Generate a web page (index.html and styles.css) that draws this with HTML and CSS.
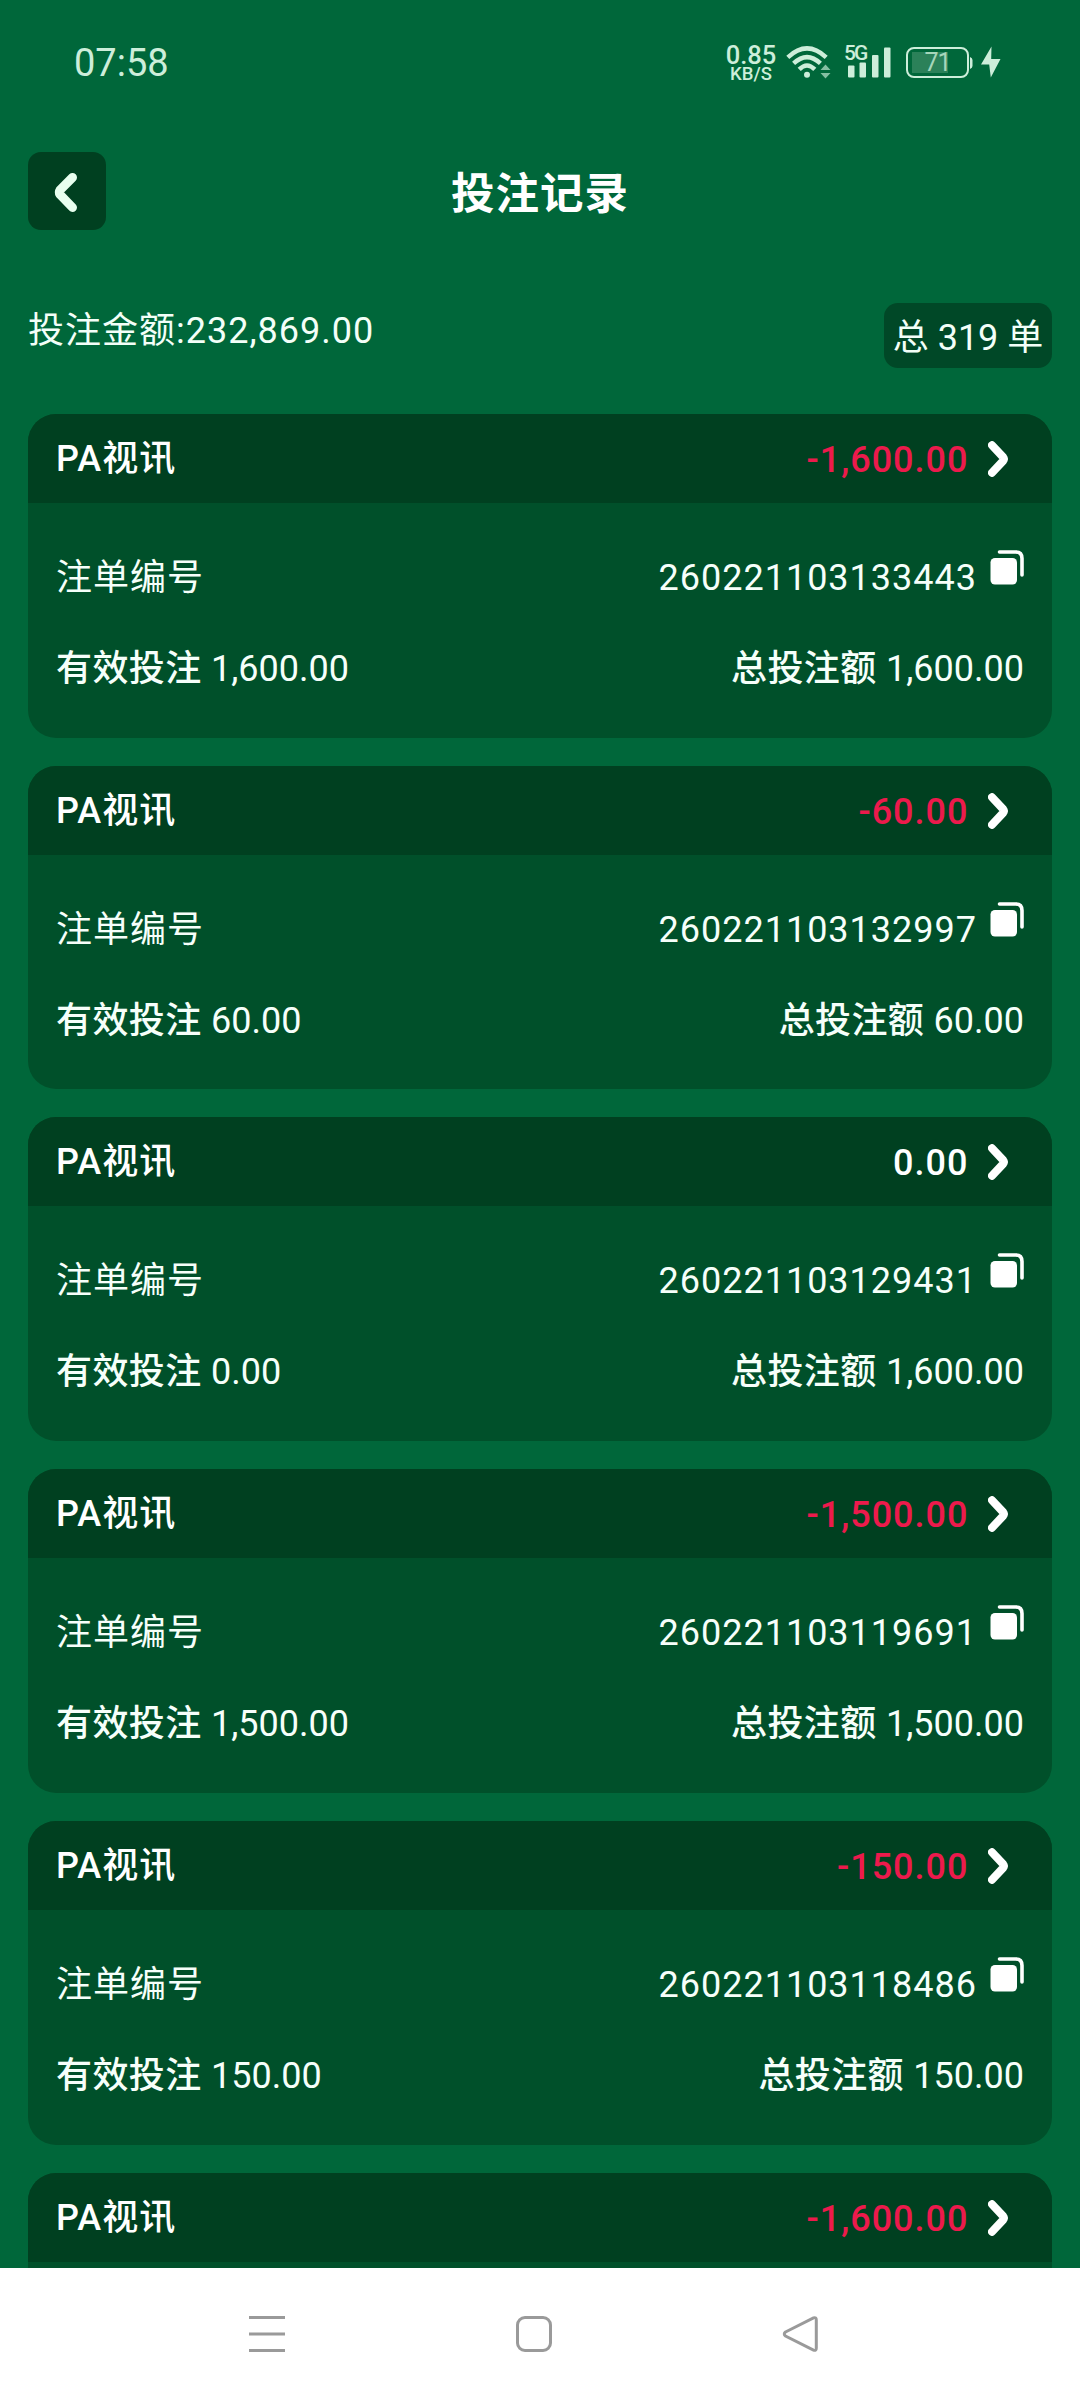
FILE: index.html
```html
<!DOCTYPE html>
<html lang="zh-CN">
<head>
<meta charset="utf-8">
<title>投注记录</title>
<link rel="stylesheet" href="styles.css">
</head>
<body>
<svg class="defs" aria-hidden="true">
  <symbol id="next" viewBox="0 0 20 36"><path d="M4 4.2 L15.2 16.2 Q16.6 18 15.2 19.8 L4 31.8"/></symbol>
  <symbol id="copy" viewBox="0 0 34 35"><rect x="0.5" y="8" width="26.5" height="26.5" rx="4.5"/><path d="M9.5 2 H26 Q32 2 32 8.5 V25"/></symbol>
</svg>
<div class="screen">
  <div class="status">
    <span class="time">07:58</span>
    <span class="speed"><span class="rate">0.85</span><span class="unit">KB/S</span></span>
    <svg class="wifi" viewBox="0 0 46 34" width="46" height="34">
      <g fill="none" stroke="currentColor" stroke-width="4.4">
        <path d="M1.8 12.3 Q21 -5.6 40.2 12.3"/>
        <path d="M7.6 18.4 Q21 5.8 34.4 18.4"/>
        <path d="M13.2 24.4 Q21 16.6 28.8 24.4"/>
      </g>
      <circle cx="21" cy="29.7" r="3"/>
      <path class="dim" d="M34.5 25 L39.5 19.5 L44.5 25 Z M34.5 28 L39.5 33.5 L44.5 28 Z"/>
    </svg>
    <div class="signal">
      <svg viewBox="0 0 48 34" width="48" height="34"><rect x="4" y="20.5" width="6.5" height="12" rx="1"/><rect x="15.5" y="17.5" width="6.5" height="15" rx="1"/><rect x="28" y="10" width="6.5" height="22.5" rx="1"/><rect x="40" y="2.5" width="6.5" height="30" rx="1"/></svg>
      <span class="net">5G</span>
    </div>
    <div class="battery"><span class="level">71</span></div>
    <svg class="tip" viewBox="0 0 4 12" width="4" height="12"><path d="M1 0 Q3.5 1 3.5 3 V9 Q3.5 11 1 12 Z"/></svg>
    <svg class="bolt" viewBox="0 0 21 32" width="21" height="32"><path d="M11.5 0.5 L1 18.5 H9.2 L10.8 31.5 L20.5 13 H11.2 Z"/></svg>
  </div>

  <div class="titlebar">
    <div class="back"><svg viewBox="0 0 78 78" width="78" height="78"><path d="M44.5 25.5 L32 38 Q30.6 40.3 32 42.5 L44.5 55.5"/></svg></div>
    <h1 class="title">投注记录</h1>
  </div>

  <div class="summary">
    <span class="sum">投注金额:232,869.00</span>
    <span class="badge">总 319 单</span>
  </div>

  <div class="list">
    <div class="card">
      <div class="head"><span>PA视讯</span><span class="amount loss">-1,600.00</span><svg class="next"><use href="#next"/></svg></div>
      <div class="body">
        <div class="row"><span class="grow">注单编号</span><span class="code">260221103133443</span><svg class="copy"><use href="#copy"/></svg></div>
        <div class="row totals"><span class="grow"><b>有效投注</b> <i>1,600.00</i></span><span><b>总投注额</b> <i>1,600.00</i></span></div>
      </div>
    </div>
    <div class="card">
      <div class="head"><span>PA视讯</span><span class="amount loss">-60.00</span><svg class="next"><use href="#next"/></svg></div>
      <div class="body">
        <div class="row"><span class="grow">注单编号</span><span class="code">260221103132997</span><svg class="copy"><use href="#copy"/></svg></div>
        <div class="row totals"><span class="grow"><b>有效投注</b> <i>60.00</i></span><span><b>总投注额</b> <i>60.00</i></span></div>
      </div>
    </div>
    <div class="card">
      <div class="head"><span>PA视讯</span><span class="amount">0.00</span><svg class="next"><use href="#next"/></svg></div>
      <div class="body">
        <div class="row"><span class="grow">注单编号</span><span class="code">260221103129431</span><svg class="copy"><use href="#copy"/></svg></div>
        <div class="row totals"><span class="grow"><b>有效投注</b> <i>0.00</i></span><span><b>总投注额</b> <i>1,600.00</i></span></div>
      </div>
    </div>
    <div class="card">
      <div class="head"><span>PA视讯</span><span class="amount loss">-1,500.00</span><svg class="next"><use href="#next"/></svg></div>
      <div class="body">
        <div class="row"><span class="grow">注单编号</span><span class="code">260221103119691</span><svg class="copy"><use href="#copy"/></svg></div>
        <div class="row totals"><span class="grow"><b>有效投注</b> <i>1,500.00</i></span><span><b>总投注额</b> <i>1,500.00</i></span></div>
      </div>
    </div>
    <div class="card">
      <div class="head"><span>PA视讯</span><span class="amount loss">-150.00</span><svg class="next"><use href="#next"/></svg></div>
      <div class="body">
        <div class="row"><span class="grow">注单编号</span><span class="code">260221103118486</span><svg class="copy"><use href="#copy"/></svg></div>
        <div class="row totals"><span class="grow"><b>有效投注</b> <i>150.00</i></span><span><b>总投注额</b> <i>150.00</i></span></div>
      </div>
    </div>
    <div class="card">
      <div class="head"><span>PA视讯</span><span class="amount loss">-1,600.00</span><svg class="next"><use href="#next"/></svg></div>
    </div>
  </div>

  <div class="nav">
    <svg viewBox="0 0 36 36" width="36" height="36"><path d="M0 1.5 H36 M0 18 H36 M0 34.5 H36"/></svg>
    <svg viewBox="0 0 36 36" width="36" height="36"><rect x="1.5" y="1.5" width="33" height="33" rx="7.5"/></svg>
    <svg viewBox="0 0 36 36" width="36" height="36"><path d="M2.5 16 L30.5 1.9 Q33.3 0.9 33.3 4 V32 Q33.3 35.1 30.5 34.1 L2.5 20 Q0 18 2.5 16 Z"/></svg>
  </div>
</div>
</body>
</html>
```

FILE: styles.css
```css
* { box-sizing: border-box; }
body {
  margin: 0;
  background: #00673a;
  color: #f3fff8;
  font: 400 36px/40px Roboto, "Noto Sans CJK SC", sans-serif;
  letter-spacing: 1px;
}
svg { display: block; flex: none; }
.defs { position: absolute; width: 0; height: 0; }
.screen { width: 1080px; height: 2400px; overflow: hidden; display: flex; flex-direction: column; }

.status {
  height: 124px;
  flex: none;
  display: flex;
  align-items: flex-start;
  padding: 45px 0 0 74px;
  color: #cdeeda;
  letter-spacing: 0;
}
.status svg { fill: currentColor; }
.time { font-size: 38px; line-height: 36px; width: 652px; }
.speed { width: 50px; display: flex; flex-direction: column; align-items: center; font-weight: 500; }
.rate { font-size: 25.5px; line-height: 20px; }
.unit { font-size: 18.5px; line-height: 18px; }
.wifi { margin-left: 10px; }
.wifi .dim { opacity: .65; }
.signal { position: relative; margin-left: 12px; width: 48px; height: 34px; }
.net { position: absolute; left: 0; top: -1px; font-size: 21px; line-height: 19px; font-weight: 500; letter-spacing: -2px; }
.battery {
  margin: 2px 0 0 14px;
  width: 63px;
  height: 31px;
  border: 2px solid currentColor;
  border-radius: 8px;
  text-align: center;
  background: linear-gradient(#2b8159, #2b8159) 4px 3px / 36px 21px no-repeat;
}
.level { display: block; font-size: 25px; line-height: 28px; letter-spacing: -1px; color: #a6d6ba; }
.tip { margin: 12px 0 0; }
.bolt { margin: 1px 0 0 7px; }

.titlebar { height: 134px; flex: none; display: grid; grid-template-columns: 78px 1fr 78px; padding: 28px 28px 0; }
.back { width: 78px; height: 78px; border-radius: 13px; background: #004020; }
.back path { fill: none; stroke: #e8ffef; stroke-width: 9; stroke-linecap: round; }
.title { margin: 0; font-size: 43.5px; line-height: 85px; font-weight: 700; text-align: center; color: #fff; }

.summary { height: 155.8px; flex: none; display: flex; justify-content: space-between; align-items: flex-start; padding: 45px 28px 0; }
.sum { margin-top: 8px; }
.badge { width: 168px; height: 65px; line-height: 70px; border-radius: 14px; background: #004827; text-align: center; white-space: nowrap; letter-spacing: 0; }

.list { flex: none; height: 1854.2px; overflow: hidden; display: flex; flex-direction: column; gap: 28px; padding: 0 28px; }
.card { flex: none; height: 323.8px; border-radius: 28px; overflow: hidden; background: #00502a; color: #fff; }
.head { height: 89px; display: flex; align-items: center; padding: 1px 44px 0 28px; background: #004020; font-weight: 500; }
.amount { margin-left: auto; padding-top: 2px; }
.loss { color: #ec1a4c; }
.next { width: 20px; height: 36px; margin-left: 19.5px; }
#next path { fill: none; stroke: #fff; stroke-width: 8; stroke-linecap: round; }
.body { padding: 55px 28px 0; display: flex; flex-direction: column; gap: 51px; }
.row { display: flex; height: 40px; white-space: nowrap; color: #f6fffa; }
.grow { flex: 1; }
.totals { letter-spacing: .4px; }
.row b { font-weight: 500; }
.row i { font-style: normal; letter-spacing: 0; }
.copy { width: 34px; height: 35px; margin: -8px 0 0 13px; }
#copy rect { fill: #fff; }
#copy path { fill: none; stroke: #fff; stroke-width: 3.6; stroke-linecap: round; }

.nav { flex: 1; background: #fff; display: flex; align-items: flex-start; justify-content: space-between; padding: 48px 261px 0 249px; }
.nav svg { fill: none; stroke: #9a9a9a; stroke-width: 3; overflow: visible; }
```
